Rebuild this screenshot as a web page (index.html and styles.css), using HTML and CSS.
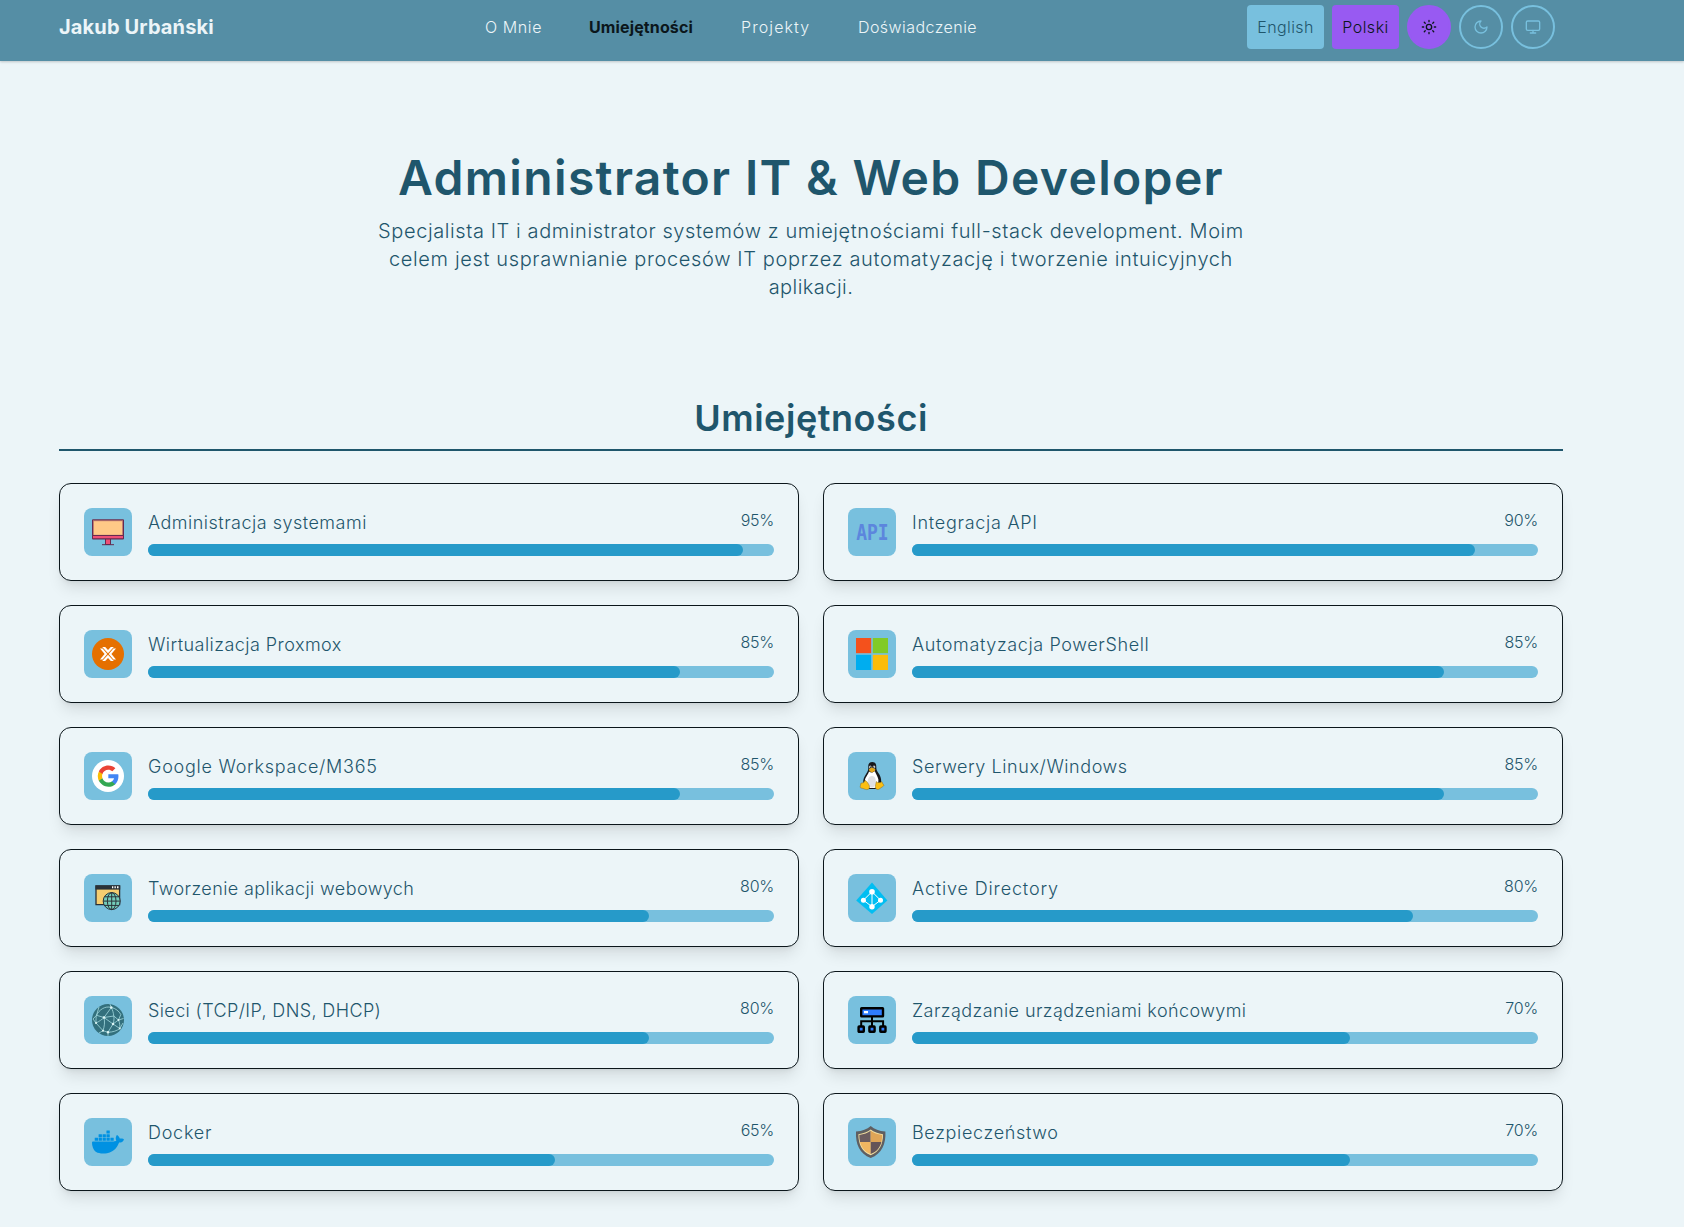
FILE: index.html
```html
<!DOCTYPE html>
<html lang="pl">
<head>
<meta charset="utf-8">
<title>Jakub Urbański</title>
<link rel="stylesheet" href="styles.css">
</head>
<body>
<header class="topbar">
  <a class="brand">Jakub Urbański</a>
  <nav class="menu">
    <a class="menu-about">O Mnie</a>
    <a class="menu-skills active">Umiejętności</a>
    <a class="menu-projects">Projekty</a>
    <a class="menu-exp">Doświadczenie</a>
  </nav>
  <div class="controls">
    <button class="lang lang-en">English</button>
    <button class="lang lang-pl">Polski</button>
    <button class="mode mode-on" aria-label="Jasny"><svg viewBox="0 0 24 24"><circle cx="12" cy="12" r="4"/><path d="M12 2v2M12 20v2M4.93 4.93l1.41 1.41M17.66 17.66l1.41 1.41M2 12h2M20 12h2M6.34 17.66l-1.41 1.41M19.07 4.93l-1.41 1.41"/></svg></button>
    <button class="mode" aria-label="Ciemny"><svg viewBox="0 0 24 24"><path d="M12 3a6 6 0 0 0 9 9 9 9 0 1 1-9-9Z"/></svg></button>
    <button class="mode" aria-label="Systemowy"><svg viewBox="0 0 24 24"><rect x="2" y="3" width="20" height="14" rx="2"/><path d="M8 21h8M12 17v4"/></svg></button>
  </div>
</header>

<main>
  <section class="hero">
    <h1>Administrator IT &amp; Web Developer</h1>
    <p><span class="line-a">Specjalista IT i administrator systemów z umiejętnościami full-stack development. Moim</span> <span class="line-b">celem jest usprawnianie procesów IT poprzez automatyzację i tworzenie intuicyjnych</span> <span class="line-c">aplikacji.</span></p>
  </section>

  <h2>Umiejętności</h2>

  <section class="grid">
    <article class="card">
      <div class="icon"><svg viewBox="0 0 32 32"><path fill="#ee4f76" stroke="#662b4f" d="M13.5 22.5h5v6h-5z"/><path stroke="#662b4f" d="M10 28.7h12"/><path fill="#c07f72" stroke="#662b4f" d="M.5 3.8h31v19H.5z"/><path fill="#ffc987" d="M2 5.2h28v13.6H2z"/><path fill="#ee4f76" stroke="#662b4f" d="M.5 19.5h31v3.3H.5z"/></svg></div>
      <div class="info"><div class="row"><h3 class="n-sys">Administracja systemami</h3><span class="pct">95%</span></div><div class="track"><div class="fill" style="width:95%"></div></div></div>
    </article>
    <article class="card">
      <div class="icon"><svg viewBox="0 0 32 32"><text class="api" x="0.2" y="24" textLength="32.5" lengthAdjust="spacingAndGlyphs">API</text></svg></div>
      <div class="info"><div class="row"><h3 class="n-api">Integracja API</h3><span class="pct">90%</span></div><div class="track"><div class="fill" style="width:90%"></div></div></div>
    </article>
    <article class="card">
      <div class="icon"><svg viewBox="0 0 32 32"><circle cx="16" cy="16" r="16" fill="#e57000"/><path fill="#fff" d="M10.2 9h3L16 12.1 18.8 9h3L16 15.3zM10.2 23h3l2.8-3.1 2.8 3.1h3L16 16.7zM8 10.5h2.600l4.700 5.500-4.700 5.500H8l4.600-5.500zM24 10.500h-2.600L16.700 16l4.700 5.500H24L19.400 16z"/></svg></div>
      <div class="info"><div class="row"><h3 class="n-prox">Wirtualizacja Proxmox</h3><span class="pct">85%</span></div><div class="track"><div class="fill" style="width:85%"></div></div></div>
    </article>
    <article class="card">
      <div class="icon"><svg viewBox="0 0 32 32"><path fill="#f4511c" d="M0 0h15.2v15.2H0z"/><path fill="#81ca27" d="M16.8 0H32v15.2H16.8z"/><path fill="#00adef" d="M0 16.8h15.2V32H0z"/><path fill="#fbbc09" d="M16.8 16.8H32V32H16.8z"/></svg></div>
      <div class="info"><div class="row"><h3 class="n-ps">Automatyzacja PowerShell</h3><span class="pct">85%</span></div><div class="track"><div class="fill" style="width:85%"></div></div></div>
    </article>
    <article class="card">
      <div class="icon"><svg viewBox="0 0 32 32"><circle cx="16" cy="16" r="16" fill="#fff"/><g transform="translate(4.800 4.600) scale(.96)"><path fill="#4285f4" d="M22.56 12.25c0-.78-.07-1.53-.2-2.25H12v4.26h5.92c-.26 1.37-1.04 2.53-2.21 3.31v2.77h3.57c2.08-1.92 3.28-4.74 3.28-8.09z"/><path fill="#34a853" d="M12 23c2.97 0 5.46-.98 7.28-2.66l-3.57-2.77c-.98.66-2.23 1.06-3.71 1.06-2.86 0-5.29-1.93-6.16-4.53H2.18v2.84C3.99 20.53 7.7 23 12 23z"/><path fill="#fbbc05" d="M5.84 14.09c-.22-.66-.35-1.36-.35-2.09s.13-1.43.35-2.09V7.07H2.18C1.43 8.55 1 10.22 1 12s.43 3.45 1.18 4.93z"/><path fill="#ea4335" d="M12 5.38c1.62 0 3.06.56 4.21 1.64l3.15-3.15C17.45 2.09 14.97 1 12 1 7.7 1 3.99 3.47 2.18 7.07l3.66 2.84c.87-2.6 3.3-4.53 6.16-4.53z"/></g></svg></div>
      <div class="info"><div class="row"><h3 class="n-goog">Google Workspace/M365</h3><span class="pct">85%</span></div><div class="track"><div class="fill" style="width:85%"></div></div></div>
    </article>
    <article class="card">
      <div class="icon"><svg viewBox="0 0 32 32"><path fill="#17181b" d="M16.2 2c-3 0-4 2-3.9 5 .1 3.200-.4 4.200-2.100 6.800C8.300 16.800 7 19.500 7.300 22.500L11 29h10.500l3.700-7c.2-4-1-6.400-3-9.200-1.500-2.200-1.900-3-1.900-6C20.300 3.700 19.200 2 16.200 2z"/><path fill="#fff" d="M13 11.500c2 1.500 4.300 1 5.800-.6.8 2.600 3 5.100 3.600 8.600.3 2.500-.9 6.500-3 8.400h-6c-2.400-2-4.400-4.500-4.400-7.500 0-3 3-5.400 4-8.900z"/><path fill="#dfe0e2" d="M16 16c3 0 4 3 3.700 6-.2 3-1.600 5.600-3.700 5.600S11.800 25 11.700 22c0-3 1.300-6 4.300-6z"/><ellipse cx="14.300" cy="7" rx="1.200" ry="1.500" fill="#d8d8d8"/><ellipse cx="18" cy="7" rx="1.300" ry="1.600" fill="#d8d8d8"/><circle cx="14.600" cy="7.200" r=".6"/><circle cx="17.700" cy="7.200" r=".6"/><path fill="#e5a614" d="M12.900 9.300l3-1.700 3.500 1.600-.6 1.700-2.700 1.500-2.600-1.200z"/><path fill="#fbbf12" stroke="#7f6a2c" stroke-width=".5" d="M4.800 23.300l2.900-.7 1.200-2.100c1.500-.3 3.500 3.200 4.300 4.900.9 2.200-.3 4.300-2.400 4.200-1.900-.1-3.300-1.200-6-1.600-1-.3-.5-2-.3-2.700zM20.300 21.500l1 .9 3.100.2 1.400-1 .8 1.700 1.300 2c-.2 1.300-2.700 1.900-4 3.300-1.500 1.400-4 1.200-4.500-.8-.3-2 .5-4.200.9-6.300z"/></svg></div>
      <div class="info"><div class="row"><h3 class="n-linux">Serwery Linux/Windows</h3><span class="pct">85%</span></div><div class="track"><div class="fill" style="width:85%"></div></div></div>
    </article>
    <article class="card">
      <div class="icon"><svg viewBox="0 0 32 32"><path fill="#f6ce70" stroke="#2a3238" stroke-width="1.300" d="M4 4h23.600v18.600H4z"/><path fill="#2a3238" d="M3.400 3.400h24.800v4.200H3.400z"/><path fill="#fff" d="M20 4.300h1.300v2H20zM22.500 4.300h1.300v2h-1.300zM25 4.300h1.500v2H25z"/><g stroke="#2a3238" stroke-width="1"><circle cx="19.700" cy="19.100" r="8.500" fill="#74cdbb"/><ellipse cx="19.700" cy="19.100" rx="4.300" ry="8.500" fill="none"/><path fill="none" d="M19.700 10.600v17M11.200 19.100h17M12.500 14.800h14.400M12.500 23.400h14.400"/></g></svg></div>
      <div class="info"><div class="row"><h3 class="n-web">Tworzenie aplikacji webowych</h3><span class="pct">80%</span></div><div class="track"><div class="fill" style="width:80%"></div></div></div>
    </article>
    <article class="card">
      <div class="icon"><svg viewBox="0 0 32 32"><path fill="#00bef2" d="M16 .4L31.400 18.400 16 32 .2 18.400z"/><path fill="none" stroke="#fff" stroke-width="1" d="M16 9.700L7.400 18.200 16 24.700l8.500-6.500zM16 9.700v15"/><g fill="#fff"><circle cx="16" cy="9.700" r="2.800"/><circle cx="7.400" cy="18.200" r="2.500"/><circle cx="24.500" cy="18.200" r="2.500"/><circle cx="16" cy="24.700" r="2.700"/></g></svg></div>
      <div class="info"><div class="row"><h3 class="n-ad">Active Directory</h3><span class="pct">80%</span></div><div class="track"><div class="fill" style="width:80%"></div></div></div>
    </article>
    <article class="card">
      <div class="icon"><svg viewBox="0 0 32 32"><circle cx="16" cy="16" r="16" fill="#33707d"/><g fill="none" stroke="#a5dbe0" stroke-width=".8"><path d="M19.300 3.500C13 1.500 7 6 4.500 11.300L12 13.500 19.300 3.500c4 .5 8 4 9.500 7L26.500 16 21 20 12 13.500c1 5 .5 8.500-1 13.200M4.500 11.300L1 15l3 4 7 7.700 5 1.500L21 20l6.800 4.500M19.300 3.500c1.500 3 2 5 2.500 8.500L12 13.500M21.800 12l4.700 4 5-1.500M21.800 12c.4 3 .2 5-.8 8M4 19c0-4 0-6 .5-7.700M16 28.200c5 0 9-1.500 11.800-3.700L31 19M26.500 16c1.300 3 1.500 5.500 1.300 8.500M19.300 3.500L18 .2M4.500 11.300L7 3M16 28.200v3.600M11 26.700L7 29M4 19c3-1.500 6-3.500 8-5.500"/></g><g fill="#dff6f5"><circle cx="19.300" cy="3.500" r="1.200"/><circle cx="12" cy="13.500" r="1.300"/><circle cx="4" cy="19" r="1"/><circle cx="21" cy="20" r="1.200"/><circle cx="16" cy="28.200" r="1.200"/><circle cx="26.500" cy="16" r="1"/><circle cx="11" cy="26.700" r="1"/><circle cx="27.800" cy="24.500" r=".9"/></g></svg></div>
      <div class="info"><div class="row"><h3 class="n-net">Sieci (TCP/IP, DNS, DHCP)</h3><span class="pct">80%</span></div><div class="track"><div class="fill" style="width:80%"></div></div></div>
    </article>
    <article class="card">
      <div class="icon"><svg viewBox="0 0 32 32"><path fill="none" stroke="#000" stroke-width="2" d="M16 13v9M5.200 22v-4.700h21.900V22"/><g fill="#2e7dff" stroke="#000" stroke-width="2.400"><rect x="5.200" y="4.200" width="21.800" height="8.200" rx=".4"/><rect x="2.600" y="22.500" width="5.200" height="5.200" rx=".5"/><rect x="13.400" y="22.500" width="5.200" height="5.200" rx=".5"/><rect x="24.300" y="22.500" width="5.200" height="5.200" rx=".5"/></g><path fill="#fff" d="M8 7h4v2.300H8z"/></svg></div>
      <div class="info"><div class="row"><h3 class="n-end">Zarządzanie urządzeniami końcowymi</h3><span class="pct">70%</span></div><div class="track"><div class="fill" style="width:70%"></div></div></div>
    </article>
    <article class="card">
      <div class="icon"><svg viewBox="0 0 24 24"><path fill="#0091e2" d="M13.983 11.078h2.119a.186.186 0 00.186-.185V9.006a.186.186 0 00-.186-.186h-2.119a.185.185 0 00-.185.185v1.888c0 .102.083.185.185.185m-2.954-5.43h2.118a.186.186 0 00.186-.186V3.574a.186.186 0 00-.186-.185h-2.118a.185.185 0 00-.185.185v1.888c0 .102.082.185.185.185m0 2.716h2.118a.187.187 0 00.186-.186V6.290a.186.186 0 00-.186-.185h-2.118a.185.185 0 00-.185.185v1.887c0 .102.082.185.185.186m-2.930 0h2.120a.186.186 0 00.184-.186V6.290a.185.185 0 00-.185-.185H8.100a.185.185 0 00-.185.185v1.887c0 .102.083.185.185.186m-2.964 0h2.119a.186.186 0 00.185-.186V6.290a.185.185 0 00-.185-.185H5.136a.186.186 0 00-.186.185v1.887c0 .102.084.185.186.186m5.893 2.715h2.118a.186.186 0 00.186-.185V9.006a.186.186 0 00-.186-.186h-2.118a.185.185 0 00-.185.185v1.888c0 .102.082.185.185.185m-2.930 0h2.120a.185.185 0 00.184-.185V9.006a.185.185 0 00-.184-.186h-2.120a.185.185 0 00-.184.185v1.888c0 .102.083.185.185.185m-2.964 0h2.119a.185.185 0 00.185-.185V9.006a.185.185 0 00-.184-.186h-2.120a.186.186 0 00-.186.186v1.887c0 .102.084.185.186.185m-2.920 0h2.120a.185.185 0 00.184-.185V9.006a.185.185 0 00-.184-.186h-2.120a.185.185 0 00-.184.185v1.888c0 .102.082.185.185.185M23.763 9.890c-.065-.051-.672-.510-1.954-.510-.338.001-.676.030-1.010.087-.248-1.700-1.653-2.530-1.716-2.566l-.344-.199-.226.327c-.284.438-.490.922-.612 1.430-.230.970-.090 1.882.403 2.661-.595.332-1.550.413-1.744.420H.751a.751.751 0 00-.750.748 11.376 11.376 0 00.692 4.062c.545 1.428 1.355 2.480 2.410 3.124 1.180.723 3.100 1.137 5.275 1.137.983.003 1.963-.086 2.930-.266a12.248 12.248 0 003.823-1.389c.980-.567 1.860-1.288 2.610-2.136 1.252-1.418 1.998-2.997 2.553-4.400h.221c1.372 0 2.215-.549 2.680-1.009.309-.293.550-.650.707-1.046l.098-.288Z"/></svg></div>
      <div class="info"><div class="row"><h3 class="n-dock">Docker</h3><span class="pct">65%</span></div><div class="track"><div class="fill" style="width:65%"></div></div></div>
    </article>
    <article class="card">
      <div class="icon"><svg viewBox="0 0 32 32"><path fill="#5f5f61" d="M14.700 0C18.500 3.300 23 5 29.400 5.600 30 18 26 28 14.700 32 3.400 28 -.6 18 0 5.600 6.400 5 10.900 3.300 14.700 0z"/><path fill="#f3dfa0" d="M14.700 3.500C18 6 22 7.700 27 8.200 27 18.500 23.500 25.500 14.700 29.300 5.900 25.500 2.400 18.500 2.400 8.200 7.400 7.700 11.400 6 14.700 3.500z"/><path fill="#6b5b5e" d="M14.700 4.800V16H4C3.500 13.500 3.300 11.500 3.300 9 8 8.400 11.500 7 14.700 4.800z"/><path fill="#dfa557" d="M14.700 4.800V16h10.700c.5-2.500.7-4.500.7-7-4.700-.6-8.200-2-11.400-4.200z"/><path fill="#f0b561" d="M14.700 28.100V16H4c1.300 5.500 4.700 9.700 10.700 12.100z"/><path fill="#655458" d="M14.700 28.100V16h10.700c-1.300 5.500-4.700 9.700-10.700 12.100z"/></svg></div>
      <div class="info"><div class="row"><h3 class="n-sec">Bezpieczeństwo</h3><span class="pct">70%</span></div><div class="track"><div class="fill" style="width:70%"></div></div></div>
    </article>
  </section>
</main>
</body>
</html>
```
FILE: styles.css
```css
* { box-sizing: border-box; margin: 0; padding: 0; }
body {
  background: #ecf5f8;
  color: #1f566c;
  font-family: Inter, "Open Sans", sans-serif;
  font-size: 16px;
  line-height: 24px;
  font-weight: 300;
  min-height: 1227px;
}
.topbar {
  display: grid;
  grid-template-columns: 426px 1fr auto;
  align-items: center;
  height: 61px;
  padding: 5px 129px 12px 59px;
  background: #558ea5;
  color: #ecf5f8;
  box-shadow: 0 1px 3px rgba(0, 0, 0, .1), 0 1px 2px rgba(0, 0, 0, .1);
}
.brand { font-size: 20px; line-height: 28px; font-weight: 700; letter-spacing: .14px; }
.menu { display: flex; gap: 48px; white-space: nowrap; }
.menu-about { letter-spacing: .59px; width: 56px; }
.menu-skills { letter-spacing: .13px; width: 104px; }
.menu-projects { letter-spacing: 1.1px; width: 69px; }
.menu-exp { letter-spacing: .44px; }
.active { color: #0b161b; font-weight: 700; }
.controls { display: flex; gap: 8px; }
.controls button { height: 44px; border: 0; font: inherit; }
.lang { border-radius: 4px; }
.controls .lang-en { width: 77px; background: #78c0de; color: #1f566c; letter-spacing: .4px; }
.controls .lang-pl { width: 67px; background: #985af2; color: #0b161b; letter-spacing: .5px; }
.controls .mode {
  display: flex;
  align-items: center;
  justify-content: center;
  width: 44px;
  border: 2px solid #78c0de;
  border-radius: 50%;
  background: none;
  color: #78c0de;
}
.controls .mode-on { background: #985af2; border-color: #985af2; color: #0b161b; }
.mode svg {
  width: 16px;
  height: 16px;
  fill: none;
  stroke: currentColor;
  stroke-width: 2;
  stroke-linecap: round;
  stroke-linejoin: round;
}
main { width: 1504px; margin-left: 59px; }
.hero { padding-top: 93px; text-align: center; }
h1 { font-size: 48px; line-height: 48px; font-weight: 600; letter-spacing: 1.34px; }
.hero p { margin-top: 15px; font-size: 20px; line-height: 28px; }
.hero p span { display: block; }
.line-a { letter-spacing: .595px; }
.line-b { letter-spacing: .64px; }
.line-c { letter-spacing: .45px; }
h2 {
  margin-top: 97px;
  height: 53px;
  border-bottom: 2px solid #1f566c;
  text-align: center;
  font-size: 36px;
  line-height: 40px;
  font-weight: 600;
  letter-spacing: .55px;
}
.grid { display: grid; grid-template-columns: 1fr 1fr; gap: 24px; margin-top: 32px; }
.card {
  display: flex;
  gap: 16px;
  height: 98px;
  padding: 24px;
  border: 1px solid #0b161b;
  border-radius: 12px;
  background: #ecf5f8;
  box-shadow: 0 10px 15px -3px rgba(0, 0, 0, .1), 0 4px 6px -4px rgba(0, 0, 0, .1);
}
.icon { width: 48px; height: 48px; padding: 8px; border-radius: 8px; background: #78c0de; }
.icon svg { display: block; width: 32px; height: 32px; overflow: visible; }
.api { font: bold 22px "DejaVu Sans Mono", monospace; fill: #5c86dd; }
.info { flex: 1; }
.row { display: flex; justify-content: space-between; height: 28px; }
h3 { font-size: 18px; line-height: 30px; font-weight: 300; white-space: nowrap; }
.pct { letter-spacing: -.25px; }
.track { height: 12px; margin-top: 8px; border-radius: 6px; background: #78c0de; }
.fill { height: 12px; border-radius: 6px; background: #269ac9; }
.n-sys { letter-spacing: .49px; }
.n-api { letter-spacing: .73px; }
.n-prox { letter-spacing: .45px; }
.n-ps { letter-spacing: .62px; }
.n-goog { letter-spacing: .74px; }
.n-linux { letter-spacing: .57px; }
.n-web { letter-spacing: .4px; }
.n-ad { letter-spacing: .85px; }
.n-net { letter-spacing: .38px; }
.n-end { letter-spacing: .41px; }
.n-dock { letter-spacing: .75px; }
.n-sec { letter-spacing: .66px; }
```
